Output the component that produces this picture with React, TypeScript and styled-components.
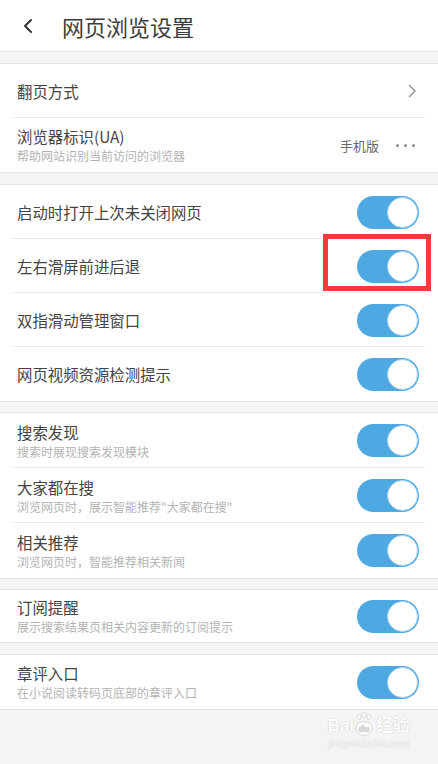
import React from 'react';
import styled, { createGlobalStyle } from 'styled-components';

const GlobalStyle = createGlobalStyle`
  html, body {
    margin: 0;
    padding: 0;
    background: #f4f4f4;
  }
  body {
    font-family: "Noto Sans CJK SC", "Noto Sans", sans-serif;
  }
`;

const Page = styled.div`
  position: relative;
  width: 438px;
  min-height: 764px;
  background: #f4f4f4;
  overflow: hidden;
`;

const Header = styled.div`
  height: 52px;
  display: flex;
  align-items: center;
  background: #fff;
  border-bottom: 1px solid #e4e4e4;
  box-sizing: border-box;
`;

const BackButton = styled.div`
  width: 62px;
  display: flex;
  align-items: center;
  padding-left: 22px;
  box-sizing: border-box;
`;

const Title = styled.h1`
  margin: 0;
  font-size: 22px;
  font-weight: 400;
  color: #3c3c3c;
`;

const Section = styled.div<{ $gap?: number }>`
  margin-top: ${(p) => p.$gap ?? 11}px;
  background: #fff;
  border-top: 1px solid #e4e4e4;
  border-bottom: 1px solid #e4e4e4;
`;

const Row = styled.div<{ $h: number; $last?: boolean }>`
  position: relative;
  height: ${(p) => p.$h}px;
  display: flex;
  align-items: center;
  justify-content: space-between;
  padding: 0 19px 0 17px;
  box-sizing: border-box;
  &::after {
    content: '';
    display: ${(p) => (p.$last ? 'none' : 'block')};
    position: absolute;
    left: 12px;
    right: 13px;
    bottom: 0;
    height: 1px;
    background: #ececec;
  }
`;

const Texts = styled.div`
  display: flex;
  flex-direction: column;
`;

const Label = styled.div`
  font-size: 15.4px;
  line-height: 22px;
  color: #444;
`;

const Sub = styled.div`
  font-size: 12px;
  line-height: 18px;
  color: #b3b3b3;
`;

const Right = styled.div`
  display: flex;
  align-items: center;
  gap: 17px;
  font-size: 13px;
  color: #6a6a6a;
`;

const Dots = styled.div`
  display: flex;
  gap: 5px;
  padding-right: 4px;
  span {
    width: 3px;
    height: 3px;
    border-radius: 50%;
    background: #8a8a8a;
  }
`;

const Track = styled.div`
  width: 62px;
  height: 33px;
  border-radius: 17px;
  background: #4ea9e3;
  display: flex;
  justify-content: flex-end;
  align-items: center;
  padding: 1px;
  box-sizing: border-box;
`;

const Thumb = styled.div`
  width: 31px;
  height: 31px;
  border-radius: 50%;
  background: #fff;
  border: 1.5px solid #a8d5f3;
  box-sizing: border-box;
`;

const Highlight = styled.div`
  position: absolute;
  left: 323px;
  top: 234px;
  width: 108px;
  height: 57px;
  border: 5px solid #f23c3c;
  box-sizing: border-box;
`;

const Footer = styled.div`
  display: flex;
  justify-content: flex-end;
  padding: 2px 28px 0 0;
`;

const Mark = styled.div`
  display: flex;
  flex-direction: column;
  align-items: center;
  color: #fff;
  font-family: "Liberation Sans", "Noto Sans CJK SC", sans-serif;
  text-shadow: 0 0 1px #c8c8c8, 0 0 1px #c8c8c8;
`;

const MarkMain = styled.div`
  display: flex;
  align-items: flex-end;
  font-size: 17px;
  font-weight: 700;
  line-height: 20px;
`;

const MarkUrl = styled.div`
  font-size: 10px;
  line-height: 12px;
  margin-top: 2px;
`;

const Toggle = () => (
  <Track>
    <Thumb />
  </Track>
);

const Paw = () => (
  <svg width="18" height="24" viewBox="0 0 18 24" style={{ margin: '0 1px' }}>
    <g fill="#fff" stroke="#cfcfcf" strokeWidth="0.8">
      <ellipse cx="4" cy="5" rx="2" ry="2.5" />
      <ellipse cx="9" cy="3" rx="2" ry="2.5" />
      <ellipse cx="14" cy="5" rx="2" ry="2.5" />
      <rect x="1" y="10" width="16" height="13" rx="6" />
    </g>
    <text x="9" y="20" fontSize="9" textAnchor="middle" fill="#d6d6d6" fontFamily="Liberation Sans">du</text>
  </svg>
);

type Item = { label: string; sub?: string };

const group2: Item[] = [
  { label: '启动时打开上次未关闭网页' },
  { label: '左右滑屏前进后退' },
  { label: '双指滑动管理窗口' },
  { label: '网页视频资源检测提示' },
];

const group3: Item[] = [
  { label: '搜索发现', sub: '搜索时展现搜索发现模块' },
  { label: '大家都在搜', sub: '浏览网页时，展示智能推荐"大家都在搜"' },
  { label: '相关推荐', sub: '浏览网页时，智能推荐相关新闻' },
];

export default function App() {
  return (
    <Page>
      <GlobalStyle />
      <Header>
        <BackButton>
          <svg width="12" height="16" viewBox="0 0 12 16">
            <path d="M9 2 L3 8 L9 14" fill="none" stroke="#333" strokeWidth="2" strokeLinecap="round" strokeLinejoin="round" />
          </svg>
        </BackButton>
        <Title>网页浏览设置</Title>
      </Header>

      <Section>
        <Row $h={54}>
          <Label>翻页方式</Label>
          <svg width="10" height="14" viewBox="0 0 10 14" style={{ marginRight: 2 }}>
            <path d="M2.5 1.5 L8 7 L2.5 12.5" fill="none" stroke="#999" strokeWidth="1.6" strokeLinecap="round" strokeLinejoin="round" />
          </svg>
        </Row>
        <Row $h={54} $last>
          <Texts>
            <Label>浏览器标识(UA)</Label>
            <Sub>帮助网站识别当前访问的浏览器</Sub>
          </Texts>
          <Right>
            <span>手机版</span>
            <Dots>
              <span />
              <span />
              <span />
            </Dots>
          </Right>
        </Row>
      </Section>

      <Section>
        {group2.map((it, i) => (
          <Row key={it.label} $h={54} $last={i === group2.length - 1}>
            <Label>{it.label}</Label>
            <Toggle />
          </Row>
        ))}
      </Section>

      <Section $gap={10}>
        {group3.map((it, i) => (
          <Row key={it.label} $h={55} $last={i === group3.length - 1}>
            <Texts>
              <Label>{it.label}</Label>
              <Sub>{it.sub}</Sub>
            </Texts>
            <Toggle />
          </Row>
        ))}
      </Section>

      <Section $gap={10}>
        <Row $h={52} $last>
          <Texts>
            <Label>订阅提醒</Label>
            <Sub>展示搜索结果页相关内容更新的订阅提示</Sub>
          </Texts>
          <Toggle />
        </Row>
      </Section>

      <Section>
        <Row $h={54} $last>
          <Texts>
            <Label>章评入口</Label>
            <Sub>在小说阅读转码页底部的章评入口</Sub>
          </Texts>
          <Toggle />
        </Row>
      </Section>

      <Footer>
        <Mark>
          <MarkMain>
            <span>Bai</span>
            <Paw />
            <span style={{ marginLeft: 2 }}>经验</span>
          </MarkMain>
          <MarkUrl>jingyan.baidu.com</MarkUrl>
        </Mark>
      </Footer>

      <Highlight />
    </Page>
  );
}
